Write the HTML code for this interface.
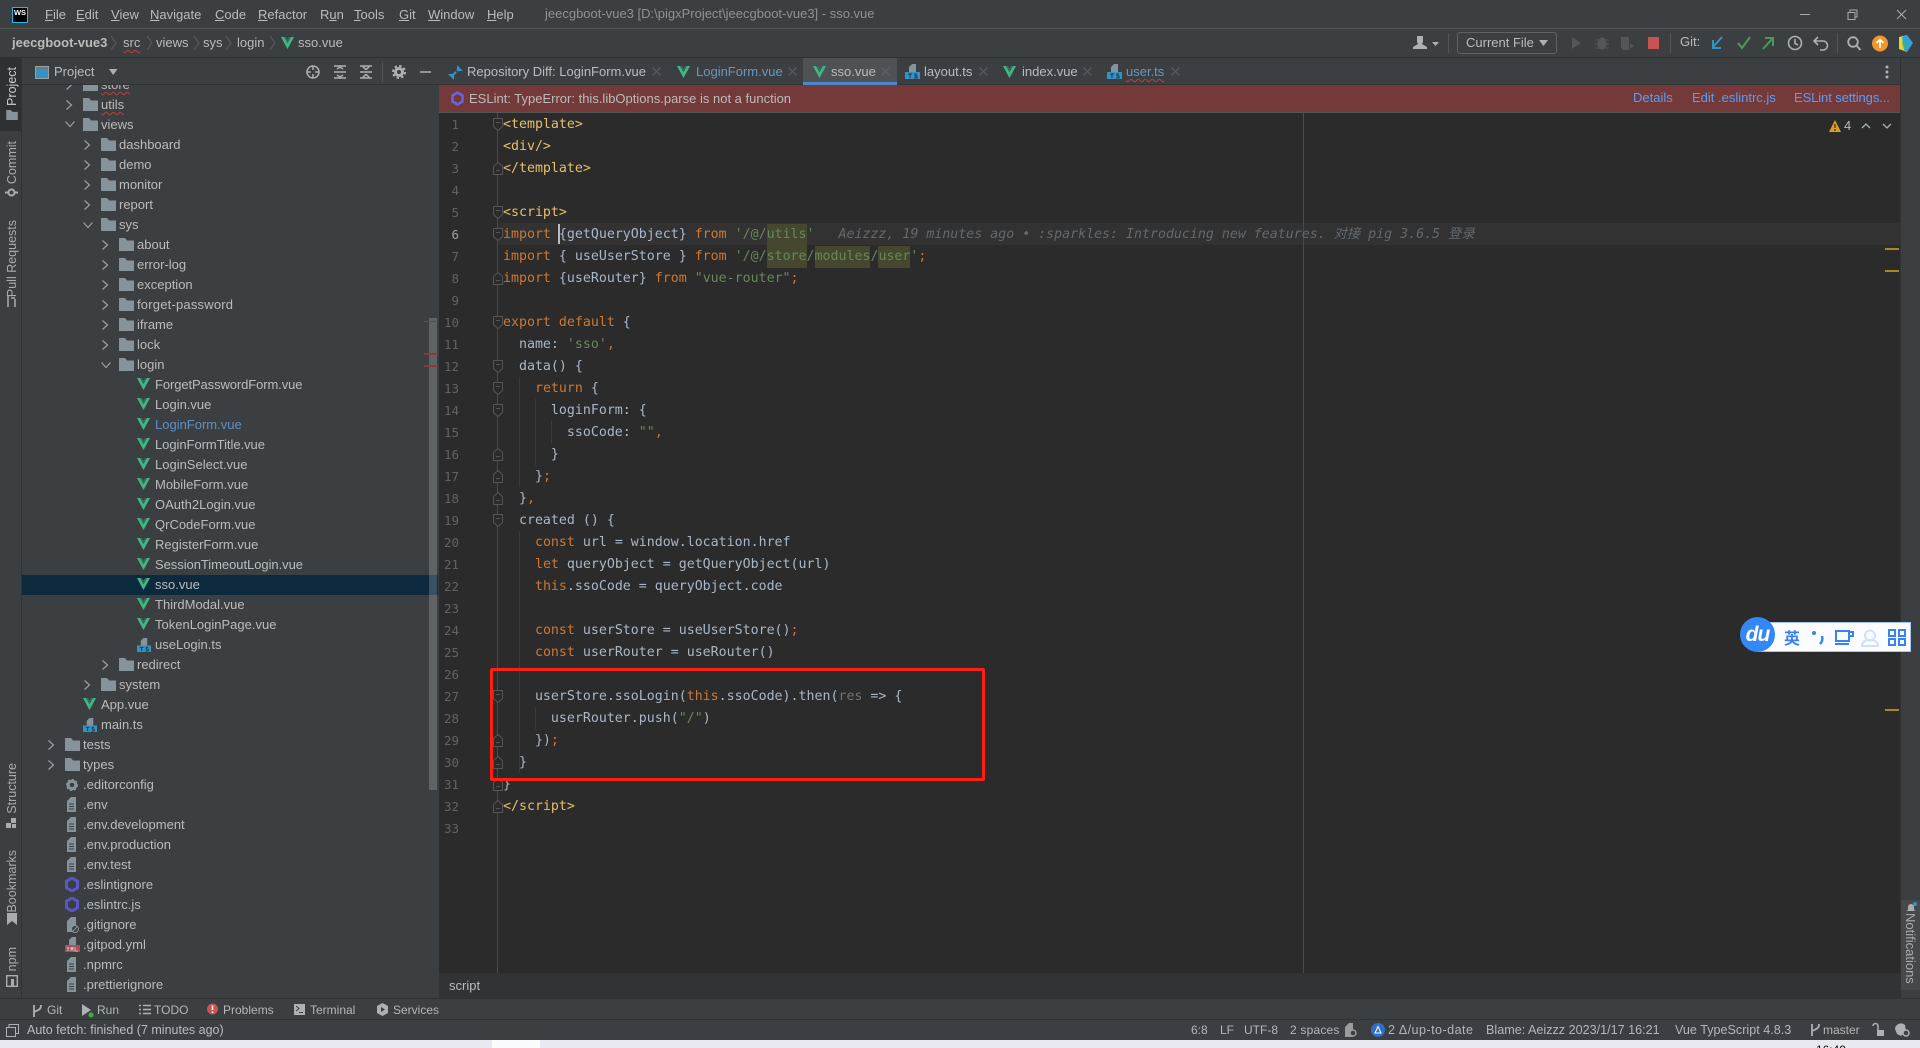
<!DOCTYPE html>
<html lang="en"><head><meta charset="utf-8"><title>jeecgboot-vue3 - sso.vue</title>
<style>
html,body{margin:0;padding:0;width:1920px;height:1048px;overflow:hidden;background:#3c3f41}
body{position:relative;font-family:"Liberation Sans","Noto Sans CJK SC",sans-serif;font-size:13px;color:#bbb}
div,svg,pre{position:absolute}
.b{left:0;right:0}
.t{white-space:nowrap;line-height:20px;height:20px}
.r{white-space:nowrap;line-height:20px;height:20px;color:#bbb}
.wv{text-decoration:underline wavy #bc3f3c 1px;text-underline-offset:2px}
svg{overflow:visible}
.f{width:15px;height:13px}.c{width:8px;height:10px;margin-left:-3px}.c[style*="width:10px"]{margin-left:0}.V{width:13px;height:12px}.d{width:12px;height:15px}
.vl{writing-mode:vertical-rl;transform:rotate(180deg);left:4px;font-size:12.500px;line-height:16px;white-space:nowrap;color:#a9adb0}
.x{width:9px;height:9px}
.n{left:440px;width:19px;text-align:right;font:12.5px/22px "DejaVu Sans Mono",monospace;color:#606366;white-space:nowrap}
.fd{width:10px;height:13px;left:493px}
.g{width:1px;background:#3b3b3b}
pre{margin:0;font:13.28px/22px "DejaVu Sans Mono","Noto Sans CJK SC",monospace;color:#a9b7c6;white-space:pre}
.k{color:#cc7832}.s{color:#6a8759}.h{color:#e8bf6a}.p{color:#72737a}.hl{background:#45482f;display:inline-block;line-height:22px}
.bl{color:#62696f;font-style:italic}
.bm{height:2px;width:14px;left:1885px;background:#a9881c}
.lk{color:#589df6}
.bt{color:#b4b7b9;font-size:12px}
.st{font-size:12.600px}
</style></head><body>
<svg width="0" height="0" style="position:absolute"><defs>
<symbol id="v" viewBox="0 0 13 12"><path d="M0 0h3l3.5 6.2L10 0h3L6.5 12z" fill="#41b883"/><path d="M3 0h2l1.5 2.8L8 0h2L6.5 6.2z" fill="#3a6b63"/></symbol>
<symbol id="f" viewBox="0 0 15 13"><path d="M0 0h6l2 2.500h7V13H0z" fill="#87939a"/></symbol>
<symbol id="cr" viewBox="0 0 8 10"><path d="M1.500 .5l5 4.500-5 4.500" fill="none" stroke="#9da0a2" stroke-width="1.200"/></symbol>
<symbol id="cd" viewBox="0 0 10 8"><path d="M.5 1.500l4.500 5 4.500-5" fill="none" stroke="#9da0a2" stroke-width="1.200"/></symbol>
<symbol id="d" viewBox="0 0 12 15"><path d="M1 15V4L5 0h5v15z" fill="#87939a"/><path d="M3 7h5M3 9.500h5M3 12h5" stroke="#3c3f41"/></symbol>
<symbol id="ts" viewBox="0 0 15 15"><path d="M4 8V3l3-3h4v8z" fill="#87939a"/><rect y="8" width="15" height="7" fill="#3592c4"/><path d="M3 10h4M5 10v4M9 14h3v-2h-2v-2h2" fill="none" stroke="#26343f"/></symbol>
<symbol id="es" viewBox="0 0 14 15"><path d="M7 1l5.500 3.200v6.600L7 14l-5.500-3.200V4.200z" fill="none" stroke="#5a55c9" stroke-width="3"/></symbol>
<symbol id="gr" viewBox="0 0 12 12"><circle cx="6" cy="6" r="3.800" fill="none" stroke="#87939a" stroke-width="3"/><circle cx="6" cy="6" r="5.200" fill="none" stroke="#87939a" stroke-width="1.800" stroke-dasharray="2 2"/></symbol>
<symbol id="x" viewBox="0 0 9 9"><path d="M.5 .5l8 8M8.500 .5l-8 8" stroke="#5e6163"/></symbol>
<symbol id="fs" viewBox="0 0 10 13"><path d="M.5 .5h9v8l-4.500 4-4.500-4zM3 4.500h4" fill="#2b2b2b" stroke="#555"/></symbol>
<symbol id="fe" viewBox="0 0 10 13"><path d="M.5 12.500h9v-8l-4.500-4-4.500 4zM3 8.500h4" fill="#2b2b2b" stroke="#555"/></symbol>
<symbol id="gt" viewBox="0 0 12 14"><path d="M3 1v12M10 1c0 5-3 5-7 7" fill="none" stroke="#aeb1b3" stroke-width="1.800"/></symbol>
</defs></svg>

<!-- title bar -->
<div class="b" style="top:0;height:28px;background:#3c3f41"></div>
<div class="b" style="top:28px;height:1px;background:#555"></div>
<div style="left:12px;top:7px;width:16px;height:16px;background:#000;border:1.500px solid #1fb8ea;box-sizing:border-box;color:#fff;font:bold 7.500px/9px 'Liberation Sans',sans-serif;text-align:center">WS</div>
<div class="t" style="left:45px;top:5px"><u>F</u>ile</div>
<div class="t" style="left:76px;top:5px"><u>E</u>dit</div>
<div class="t" style="left:111px;top:5px"><u>V</u>iew</div>
<div class="t" style="left:150px;top:5px"><u>N</u>avigate</div>
<div class="t" style="left:215px;top:5px"><u>C</u>ode</div>
<div class="t" style="left:258px;top:5px"><u>R</u>efactor</div>
<div class="t" style="left:320px;top:5px">R<u>u</u>n</div>
<div class="t" style="left:354px;top:5px"><u>T</u>ools</div>
<div class="t" style="left:399px;top:5px"><u>G</u>it</div>
<div class="t" style="left:428px;top:5px"><u>W</u>indow</div>
<div class="t" style="left:487px;top:5px"><u>H</u>elp</div>
<div class="t" style="left:545px;top:4px;color:#8f9294">jeecgboot-vue3 [D:\pigxProject\jeecgboot-vue3] - sso.vue</div>
<svg style="left:1797px;top:8px;width:120px;height:12px"><path d="M3 6.500h10" stroke="#aaa"/><path d="M51 4.500h7v7h-7zM53 4.500V2h7v7h-2" fill="none" stroke="#aaa"/><path d="M100 2l9 9M109 2l-9 9" stroke="#aaa"/></svg>

<!-- nav bar -->
<div class="b" style="top:57px;height:1px;background:#2d2f30"></div>
<div class="t" style="left:12px;top:33px;font-weight:bold;color:#bbb">jeecgboot-vue3</div>
<div class="t" style="left:123px;top:33px"><span class="wv">src</span></div>
<div class="t" style="left:156px;top:33px">views</div>
<div class="t" style="left:203px;top:33px">sys</div>
<div class="t" style="left:237px;top:33px">login</div>
<svg style="left:110px;top:36px;width:170px;height:14px" fill="none" stroke="#5a5d5f"><path d="M1 0l5 7-5 7M37 0l5 7-5 7M84 0l5 7-5 7M116 0l5 7-5 7M160 0l5 7-5 7"/></svg>
<svg class="V" style="left:281px;top:37px"><use href="#v"/></svg>
<div class="t" style="left:298px;top:33px">sso.vue</div>
<svg style="left:1413px;top:36px;width:30px;height:14px"><path d="M4 0h6v6l-1 2 5 3v2H0v-2l5-3-1-2z" fill="#aeb1b3"/><path d="M19 6h7l-3.500 4z" fill="#aeb1b3"/></svg>
<div style="left:1448px;top:33px;width:1px;height:20px;background:#515557"></div>
<div style="left:1457px;top:32px;width:100px;height:22px;border:1px solid #5f6366;border-radius:3px;box-sizing:border-box"></div>
<div class="t" style="left:1466px;top:33px">Current File</div>
<svg style="left:1539px;top:40px;width:10px;height:7px"><path d="M0 0h9L4.500 6z" fill="#aeb1b3"/></svg>
<svg style="left:1571px;top:36px;width:95px;height:14px">
<path d="M1 1l9 6-9 6z" fill="#53575a"/>
<ellipse cx="31" cy="7.500" rx="4.500" ry="6" fill="#53575a"/><path d="M24 4h14M24 8h14M24 12h14" stroke="#53575a"/>
<path d="M50 1h8v13h-6l-2-3z" fill="#53575a"/><path d="M59 7l4 3-4 3z" fill="#53575a"/>
<rect x="77" y="1" width="11" height="12" fill="#c75450"/></svg>
<div style="left:1670px;top:33px;width:1px;height:20px;background:#515557"></div>
<div class="t" style="left:1680px;top:32px">Git:</div>
<svg style="left:1711px;top:36px;width:70px;height:14px" fill="none" stroke-width="2"><path d="M11 1L2 11M2 4v8h8" stroke="#3592c4"/><path d="M27 7l4 5 8-11" stroke="#499c54"/><path d="M52 13L62 2M54 2h8v8" stroke="#499c54"/></svg>
<svg style="left:1787px;top:35px;width:45px;height:16px" fill="none" stroke="#aeb1b3" stroke-width="1.600"><circle cx="8" cy="8" r="6.500"/><path d="M8 4v4.500l3 1.500"/><path d="M28 6h8a4.500 4.500 0 0 1 0 9h-3M31 2l-4 4 4 4"/></svg>
<div style="left:1837px;top:33px;width:1px;height:20px;background:#515557"></div>
<svg style="left:1847px;top:36px;width:14px;height:15px" fill="none" stroke="#aeb1b3" stroke-width="1.800"><circle cx="6" cy="6" r="4.800"/><path d="M9.500 9.500l4 4.500"/></svg>
<svg style="left:1872px;top:35px;width:16px;height:17px"><circle cx="8" cy="8.500" r="8" fill="#f2972b"/><path d="M8 13V5M4.500 8L8 4.500 11.500 8" fill="none" stroke="#fff" stroke-width="1.600"/></svg>
<svg style="left:1899px;top:35px;width:15px;height:17px"><path d="M0 2l8-2v17l-8-3z" fill="#e6d33f"/><path d="M3 2l5-2 6 8-6 9-3-2z" fill="#2fa4d8"/><path d="M3 7l5 1-3 6z" fill="#3bb76c"/></svg>

<!-- left stripe -->
<div style="left:0;top:58px;width:22px;height:940px;background:#3c3f41;border-right:1px solid #323232;box-sizing:border-box"></div>
<div style="left:0;top:58px;width:21px;height:73px;background:#2e3032"></div>
<div class="vl" style="top:67px;color:#cdd0d2">Project</div>
<svg style="left:6px;top:110px;width:12px;height:10px"><use href="#f"/></svg>
<div class="vl" style="top:141px">Commit</div>
<svg style="left:5px;top:186px;width:13px;height:13px" fill="none" stroke="#a9adb0" stroke-width="2"><circle cx="6.500" cy="6.500" r="3"/><path d="M0 6.500h3M10 6.500h3"/></svg>
<div class="vl" style="top:220px">Pull Requests</div>
<svg style="left:6px;top:295px;width:11px;height:12px" fill="none" stroke="#a9adb0" stroke-width="1.500"><path d="M2 1v11M9 4v8M5 3h4"/></svg>
<div class="vl" style="top:763px">Structure</div>
<svg style="left:6px;top:818px;width:11px;height:10px"><path d="M5 0h5v5H5zM0 5h5v5H0zM6 6h4v4H6z" fill="#a9adb0"/></svg>
<div class="vl" style="top:850px">Bookmarks</div>
<svg style="left:7px;top:913px;width:10px;height:12px"><path d="M0 0h10v12L5 8l-5 4z" fill="#a9adb0"/></svg>
<div class="vl" style="top:947px">npm</div>
<svg style="left:6px;top:975px;width:12px;height:12px"><rect x=".7" y=".7" width="10.600" height="10.600" fill="none" stroke="#a9adb0" stroke-width="1.400"/><rect x="5" y="4" width="3" height="7" fill="#a9adb0"/></svg>

<!-- project tree -->
<div style="left:22px;top:575px;width:416px;height:20px;background:#0d293e"></div>
<div style="left:429px;top:318px;width:8px;height:472px;background:rgba(255,255,255,.19)"></div>
<div style="left:424px;top:321px;width:14px;height:1px;background:#8a3a3a"></div>
<div style="left:424px;top:353px;width:14px;height:2px;background:#8a3a3a"></div>
<div style="left:424px;top:365px;width:14px;height:2px;background:#8a3a3a"></div>

<svg class="c" style="left:68px;top:80px"><use href="#cr"/></svg><svg class="f" style="left:83px;top:78px"><use href="#f"/></svg><div class="r" style="left:101px;top:75px"><span class="wv">store</span></div>
<svg class="c" style="left:68px;top:100px"><use href="#cr"/></svg><svg class="f" style="left:83px;top:98px"><use href="#f"/></svg><div class="r" style="left:101px;top:95px"><span class="wv">utils</span></div>
<svg class="c" style="left:65px;top:120px;width:10px;height:8px"><use href="#cd"/></svg><svg class="f" style="left:83px;top:118px"><use href="#f"/></svg><div class="r" style="left:101px;top:115px">views</div>
<svg class="c" style="left:86px;top:140px"><use href="#cr"/></svg><svg class="f" style="left:101px;top:138px"><use href="#f"/></svg><div class="r" style="left:119px;top:135px">dashboard</div>
<svg class="c" style="left:86px;top:160px"><use href="#cr"/></svg><svg class="f" style="left:101px;top:158px"><use href="#f"/></svg><div class="r" style="left:119px;top:155px">demo</div>
<svg class="c" style="left:86px;top:180px"><use href="#cr"/></svg><svg class="f" style="left:101px;top:178px"><use href="#f"/></svg><div class="r" style="left:119px;top:175px">monitor</div>
<svg class="c" style="left:86px;top:200px"><use href="#cr"/></svg><svg class="f" style="left:101px;top:198px"><use href="#f"/></svg><div class="r" style="left:119px;top:195px">report</div>
<svg class="c" style="left:83px;top:221px;width:10px;height:8px"><use href="#cd"/></svg><svg class="f" style="left:101px;top:218px"><use href="#f"/></svg><div class="r" style="left:119px;top:215px">sys</div>
<svg class="c" style="left:104px;top:240px"><use href="#cr"/></svg><svg class="f" style="left:119px;top:238px"><use href="#f"/></svg><div class="r" style="left:137px;top:235px">about</div>
<svg class="c" style="left:104px;top:260px"><use href="#cr"/></svg><svg class="f" style="left:119px;top:258px"><use href="#f"/></svg><div class="r" style="left:137px;top:255px">error-log</div>
<svg class="c" style="left:104px;top:280px"><use href="#cr"/></svg><svg class="f" style="left:119px;top:278px"><use href="#f"/></svg><div class="r" style="left:137px;top:275px">exception</div>
<svg class="c" style="left:104px;top:300px"><use href="#cr"/></svg><svg class="f" style="left:119px;top:298px"><use href="#f"/></svg><div class="r" style="left:137px;top:295px;letter-spacing:.2px">forget-password</div>
<svg class="c" style="left:104px;top:320px"><use href="#cr"/></svg><svg class="f" style="left:119px;top:318px"><use href="#f"/></svg><div class="r" style="left:137px;top:315px">iframe</div>
<svg class="c" style="left:104px;top:340px"><use href="#cr"/></svg><svg class="f" style="left:119px;top:338px"><use href="#f"/></svg><div class="r" style="left:137px;top:335px">lock</div>
<svg class="c" style="left:101px;top:361px;width:10px;height:8px"><use href="#cd"/></svg><svg class="f" style="left:119px;top:358px"><use href="#f"/></svg><div class="r" style="left:137px;top:355px">login</div>

<svg class="V" style="left:137px;top:378px"><use href="#v"/></svg><div class="r" style="left:155px;top:375px;letter-spacing:-.1px">ForgetPasswordForm.vue</div>
<svg class="V" style="left:137px;top:398px"><use href="#v"/></svg><div class="r" style="left:155px;top:395px">Login.vue</div>
<svg class="V" style="left:137px;top:418px"><use href="#v"/></svg><div class="r" style="left:155px;top:415px;color:#5c8fc4">LoginForm.vue</div>
<svg class="V" style="left:137px;top:438px"><use href="#v"/></svg><div class="r" style="left:155px;top:435px;letter-spacing:-.05px">LoginFormTitle.vue</div>
<svg class="V" style="left:137px;top:458px"><use href="#v"/></svg><div class="r" style="left:155px;top:455px">LoginSelect.vue</div>
<svg class="V" style="left:137px;top:478px"><use href="#v"/></svg><div class="r" style="left:155px;top:475px">MobileForm.vue</div>
<svg class="V" style="left:137px;top:498px"><use href="#v"/></svg><div class="r" style="left:155px;top:495px">OAuth2Login.vue</div>
<svg class="V" style="left:137px;top:518px"><use href="#v"/></svg><div class="r" style="left:155px;top:515px">QrCodeForm.vue</div>
<svg class="V" style="left:137px;top:538px"><use href="#v"/></svg><div class="r" style="left:155px;top:535px">RegisterForm.vue</div>
<svg class="V" style="left:137px;top:558px"><use href="#v"/></svg><div class="r" style="left:155px;top:555px;letter-spacing:-.05px">SessionTimeoutLogin.vue</div>
<svg class="V" style="left:137px;top:578px"><use href="#v"/></svg><div class="r" style="left:155px;top:575px">sso.vue</div>
<svg class="V" style="left:137px;top:598px"><use href="#v"/></svg><div class="r" style="left:155px;top:595px">ThirdModal.vue</div>
<svg class="V" style="left:137px;top:618px"><use href="#v"/></svg><div class="r" style="left:155px;top:615px">TokenLoginPage.vue</div>
<svg class="d" style="left:137px;top:638px;width:14px;height:14px"><use href="#ts"/></svg><div class="r" style="left:155px;top:635px">useLogin.ts</div>
<svg class="c" style="left:104px;top:660px"><use href="#cr"/></svg><svg class="f" style="left:119px;top:658px"><use href="#f"/></svg><div class="r" style="left:137px;top:655px">redirect</div>
<svg class="c" style="left:86px;top:680px"><use href="#cr"/></svg><svg class="f" style="left:101px;top:678px"><use href="#f"/></svg><div class="r" style="left:119px;top:675px">system</div>
<svg class="V" style="left:83px;top:698px"><use href="#v"/></svg><div class="r" style="left:101px;top:695px">App.vue</div>
<svg class="d" style="left:83px;top:718px;width:14px;height:14px"><use href="#ts"/></svg><div class="r" style="left:101px;top:715px">main.ts</div>
<svg class="c" style="left:50px;top:740px"><use href="#cr"/></svg><svg class="f" style="left:65px;top:738px"><use href="#f"/></svg><div class="r" style="left:83px;top:735px">tests</div>
<svg class="c" style="left:50px;top:760px"><use href="#cr"/></svg><svg class="f" style="left:65px;top:758px"><use href="#f"/></svg><div class="r" style="left:83px;top:755px">types</div>
<svg style="left:66px;top:779px;width:12px;height:12px"><use href="#gr"/></svg><div class="r" style="left:83px;top:775px">.editorconfig</div>
<svg class="d" style="left:66px;top:797px"><use href="#d"/></svg><div class="r" style="left:83px;top:795px">.env</div>
<svg class="d" style="left:66px;top:817px"><use href="#d"/></svg><div class="r" style="left:83px;top:815px">.env.development</div>
<svg class="d" style="left:66px;top:837px"><use href="#d"/></svg><div class="r" style="left:83px;top:835px">.env.production</div>
<svg class="d" style="left:66px;top:857px"><use href="#d"/></svg><div class="r" style="left:83px;top:855px">.env.test</div>
<svg class="d" style="left:65px;top:877px;width:14px;height:15px"><use href="#es"/></svg><div class="r" style="left:83px;top:875px">.eslintignore</div>
<svg class="d" style="left:65px;top:897px;width:14px;height:15px"><use href="#es"/></svg><div class="r" style="left:83px;top:895px">.eslintrc.js</div>
<svg class="d" style="left:66px;top:917px"><path d="M1 15V4L5 0h5v15z" fill="#87939a"/><circle cx="9" cy="12" r="3.500" fill="#3c3f41" stroke="#87939a"/><path d="M7 14l4-4" stroke="#87939a"/></svg><div class="r" style="left:83px;top:915px">.gitignore</div>
<svg class="d" style="left:65px;top:937px;width:15px;height:15px"><path d="M4 8V3l3-3h4v8z" fill="#87939a"/><rect y="8" width="15" height="7" fill="#a8505e"/><path d="M2 10l1 2 1-2M3 12v2M6 14v-4l1 2 1-2v4M10 10v4h3" fill="none" stroke="#e6c8cd" stroke-width=".8"/></svg><div class="r" style="left:83px;top:935px">.gitpod.yml</div>
<svg class="d" style="left:66px;top:957px"><use href="#d"/></svg><div class="r" style="left:83px;top:955px">.npmrc</div>
<svg class="d" style="left:66px;top:977px"><use href="#d"/></svg><div class="r" style="left:83px;top:975px">.prettierignore</div>

<!-- project header (covers clipped rows) -->
<div style="left:22px;top:58px;width:417px;height:27px;background:#3c3f41;border-bottom:1px solid #323232;box-sizing:border-box"></div>
<svg style="left:35px;top:66px;width:14px;height:13px"><rect x=".5" y=".5" width="13" height="12" fill="#3592c4" stroke="#9aa0a4"/><rect x="1" y="1" width="12" height="2.500" fill="#6e7b84"/></svg>
<div class="t" style="left:54px;top:62px">Project</div>
<svg style="left:109px;top:69px;width:9px;height:7px"><path d="M0 0h8.500L4.200 6z" fill="#aeb1b3"/></svg>
<svg style="left:306px;top:64px;width:125px;height:16px" fill="none" stroke="#aeb1b3" stroke-width="1.500">
<circle cx="7" cy="8" r="6"/><path d="M7 2v4M7 10v4M1 8h4M9 8h4"/>
<path d="M28 2h12M28 14h12M28 8h12M31 5l3-2 3 2M31 11l3 2 3-2"/>
<path d="M54 2h12M54 14h12M54 8h12M57 3l3 2.500 3-2.500M57 13l3-2.500 3 2.500"/>
<circle cx="93" cy="8" r="3.500" stroke-width="3"/><circle cx="93" cy="8" r="6" stroke-width="2" stroke-dasharray="2.500 2.200"/>
<path d="M114 8h11"/></svg>
<div style="left:382px;top:62px;width:1px;height:20px;background:#515557"></div>

<!-- tabs -->
<div style="left:439px;top:58px;right:20px;height:27px;background:#3c3f41;border-bottom:1px solid #323232;box-sizing:border-box"></div>
<div style="left:803px;top:58px;width:94px;height:27px;background:#4e5254"></div>
<div style="left:803px;top:82px;width:94px;height:3px;background:#4a88c7"></div>
<svg style="left:448px;top:65px;width:15px;height:15px"><path d="M9 0v6h6L12 3zM6 15V9H0l3 3z" fill="#3592c4"/><path d="M8 7l-3 3M9 4l2 2" stroke="#3592c4" stroke-width="2"/></svg>
<div class="t" style="left:467px;top:62px">Repository Diff: LoginForm.vue</div>
<svg class="x" style="left:652px;top:67px"><use href="#x"/></svg>
<svg class="V" style="left:677px;top:66px"><use href="#v"/></svg>
<div class="t" style="left:696px;top:62px;color:#6897bb">LoginForm.vue</div>
<svg class="x" style="left:788px;top:67px"><use href="#x"/></svg>
<svg class="V" style="left:813px;top:66px"><use href="#v"/></svg>
<div class="t" style="left:831px;top:62px">sso.vue</div>
<svg class="x" style="left:881px;top:67px"><use href="#x"/></svg>
<svg style="left:905px;top:64px;width:15px;height:15px"><use href="#ts"/></svg>
<div class="t" style="left:924px;top:62px">layout.ts</div>
<svg class="x" style="left:979px;top:67px"><use href="#x"/></svg>
<svg class="V" style="left:1003px;top:66px"><use href="#v"/></svg>
<div class="t" style="left:1022px;top:62px">index.vue</div>
<svg class="x" style="left:1083px;top:67px"><use href="#x"/></svg>
<svg style="left:1107px;top:64px;width:15px;height:15px"><use href="#ts"/></svg>
<div class="t" style="left:1126px;top:62px;color:#6897bb"><span class="wv">user.ts</span></div>
<svg class="x" style="left:1171px;top:67px"><use href="#x"/></svg>
<svg style="left:1885px;top:65px;width:4px;height:14px"><circle cx="2" cy="2" r="1.500" fill="#aeb1b3"/><circle cx="2" cy="7" r="1.500" fill="#aeb1b3"/><circle cx="2" cy="12" r="1.500" fill="#aeb1b3"/></svg>

<!-- error bar -->
<div style="left:439px;top:85px;width:1461px;height:27px;background:#743a3a"></div>
<div style="left:439px;top:112px;width:1461px;height:1px;background:#555"></div>
<svg style="left:451px;top:91px;width:13px;height:15px"><path d="M6.500 1.500l5 3v6l-5 3-5-3v-6z" fill="none" stroke="#6a63e0" stroke-width="2.500"/></svg>
<div class="t" style="left:469px;top:89px">ESLint: TypeError: this.libOptions.parse is not a function</div>
<div class="t lk" style="left:1633px;top:88px">Details</div>
<div class="t lk" style="left:1692px;top:88px">Edit .eslintrc.js</div>
<div class="t lk" style="left:1794px;top:88px;letter-spacing:-.1px">ESLint settings...</div>

<!-- editor -->
<div style="left:439px;top:113px;width:1461px;height:860px;background:#2b2b2b"></div>
<div style="left:498px;top:223px;width:1402px;height:22px;background:#323232"></div>
<div style="left:497px;top:113px;width:1px;height:860px;background:#4a4a4a"></div>
<div style="left:1303px;top:113px;width:1px;height:860px;background:#4a4a4a"></div>
<div class="g" style="left:519px;top:377px;height:110px"></div>
<div class="g" style="left:535px;top:399px;height:66px"></div>
<div class="g" style="left:551px;top:421px;height:22px"></div>
<div class="g" style="left:519px;top:531px;height:242px"></div>
<div class="g" style="left:535px;top:707px;height:22px"></div>

<div class="n" style="top:114px">1</div><div class="n" style="top:136px">2</div><div class="n" style="top:158px">3</div><div class="n" style="top:180px">4</div><div class="n" style="top:202px">5</div><div class="n" style="top:224px;color:#a4a3a3">6</div><div class="n" style="top:246px">7</div><div class="n" style="top:268px">8</div><div class="n" style="top:290px">9</div><div class="n" style="top:312px">10</div><div class="n" style="top:334px">11</div><div class="n" style="top:356px">12</div><div class="n" style="top:378px">13</div><div class="n" style="top:400px">14</div><div class="n" style="top:422px">15</div><div class="n" style="top:444px">16</div><div class="n" style="top:466px">17</div><div class="n" style="top:488px">18</div><div class="n" style="top:510px">19</div><div class="n" style="top:532px">20</div><div class="n" style="top:554px">21</div><div class="n" style="top:576px">22</div><div class="n" style="top:598px">23</div><div class="n" style="top:620px">24</div><div class="n" style="top:642px">25</div><div class="n" style="top:664px">26</div><div class="n" style="top:686px">27</div><div class="n" style="top:708px">28</div><div class="n" style="top:730px">29</div><div class="n" style="top:752px">30</div><div class="n" style="top:774px">31</div><div class="n" style="top:796px">32</div><div class="n" style="top:818px">33</div>

<svg class="fd" style="top:118px"><use href="#fs"/></svg><svg class="fd" style="top:162px"><use href="#fe"/></svg><svg class="fd" style="top:206px"><use href="#fs"/></svg><svg class="fd" style="top:228px"><use href="#fs"/></svg><svg class="fd" style="top:272px"><use href="#fe"/></svg><svg class="fd" style="top:316px"><use href="#fs"/></svg><svg class="fd" style="top:360px"><use href="#fs"/></svg><svg class="fd" style="top:382px"><use href="#fs"/></svg><svg class="fd" style="top:404px"><use href="#fs"/></svg><svg class="fd" style="top:448px"><use href="#fe"/></svg><svg class="fd" style="top:470px"><use href="#fe"/></svg><svg class="fd" style="top:492px"><use href="#fe"/></svg><svg class="fd" style="top:514px"><use href="#fs"/></svg><svg class="fd" style="top:690px"><use href="#fs"/></svg><svg class="fd" style="top:734px"><use href="#fe"/></svg><svg class="fd" style="top:756px"><use href="#fe"/></svg><svg class="fd" style="top:778px"><use href="#fe"/></svg><svg class="fd" style="top:800px"><use href="#fe"/></svg>

<pre style="left:503px;top:114px"><span class="h">&lt;template&gt;</span>
<span class="h">&lt;div/&gt;</span>
<span class="h">&lt;/template&gt;</span>

<span class="h">&lt;script&gt;</span>
<span class="k">import</span> {getQueryObject} <span class="k">from</span> <span class="s">'/@/<span class="hl">utils</span>'</span>   <span class="bl">Aeizzz, 19 minutes ago • :sparkles: Introducing new features. 对接 pig 3.6.5 登录</span>
<span class="k">import</span> { useUserStore } <span class="k">from</span> <span class="s">'/@/<span class="hl">store</span>/<span class="hl">modules</span>/<span class="hl">user</span>'</span><span class="k">;</span>
<span class="k">import</span> {useRouter} <span class="k">from</span> <span class="s">"vue-router"</span><span class="k">;</span>

<span class="k">export default</span> {
  name: <span class="s">'sso'</span><span class="k">,</span>
  data() {
    <span class="k">return</span> {
      loginForm: {
        ssoCode: <span class="s">""</span><span class="k">,</span>
      }
    }<span class="k">;</span>
  }<span class="k">,</span>
  created () {
    <span class="k">const</span> url = window.location.href
    <span class="k">let</span> queryObject = getQueryObject(url)
    <span class="k">this</span>.ssoCode = queryObject.code

    <span class="k">const</span> userStore = useUserStore()<span class="k">;</span>
    <span class="k">const</span> userRouter = useRouter()

    userStore.ssoLogin(<span class="k">this</span>.ssoCode).then(<span class="p">res</span> =&gt; {
      userRouter.push(<span class="s">"/"</span>)
    })<span class="k">;</span>
  }
}
<span class="h">&lt;/script&gt;</span>
</pre>
<div style="left:558px;top:224px;width:2px;height:20px;background:#bbb"></div>
<div style="left:490px;top:668px;width:495px;height:113px;border:3px solid #ff1f14;border-radius:2px;box-sizing:border-box"></div>

<!-- breadcrumb -->
<div style="left:439px;top:973px;width:1461px;height:25px;background:#313335;border-top:1px solid #323232;box-sizing:border-box"></div>
<div class="t" style="left:449px;top:976px">script</div>

<!-- warnings -->
<svg style="left:1829px;top:119px;width:70px;height:14px"><path d="M6 1l6 12H0z" fill="#d9a21b"/><path d="M6 5v4M6 10v2" stroke="#3c3020" stroke-width="1.300"/><path d="M33 9l4-4 4 4M54 5l4 4 4-4" fill="none" stroke="#aeb1b3" stroke-width="1.300"/></svg>
<div class="t" style="left:1844px;top:116px">4</div>

<!-- right stripe -->
<div style="left:1900px;top:58px;width:20px;height:940px;background:#3c3f41;border-left:1px solid #323232;box-sizing:border-box"></div>
<div class="bm" style="top:248px"></div><div class="bm" style="top:270px"></div><div class="bm" style="top:709px"></div>
<div style="left:1901px;top:900px;width:19px;height:90px;background:#45494b"></div>
<svg style="left:1905px;top:902px;width:12px;height:11px"><path d="M1 9c2 0 2-2 2-4a3 3 0 0 1 6 0c0 2 0 4 2 4z" fill="#a9adb0"/><circle cx="10" cy="2" r="2" fill="#3592c4"/></svg>
<div style="left:1903px;top:913px;writing-mode:vertical-rl;font-size:13px;line-height:14px;color:#a9adb0;white-space:nowrap">Notifications</div>

<!-- baidu ime -->
<div style="left:1757px;top:622px;width:154px;height:30px;background:#fbfcff;border:1px solid #a8c6f5;box-sizing:border-box"></div>
<div style="left:1740px;top:617px;width:35px;height:35px;border-radius:50%;background:#3388f5;color:#fff;text-align:center;font:italic bold 21px/35px 'Liberation Sans',sans-serif;letter-spacing:-1px">du</div>
<div style="left:1784px;top:626px;font:bold 16px/22px 'Noto Sans CJK SC',sans-serif;color:#3a82f0;white-space:nowrap">英</div>
<svg style="left:1811px;top:629px;width:96px;height:18px"><circle cx="3" cy="4" r="2" fill="#3a82f0"/><path d="M11 7c1 4 0 6-2 8" fill="none" stroke="#3a82f0" stroke-width="2.500"/>
<path d="M25 2h13v10H25zM38 3h4v4h-4M24 15h14" fill="none" stroke="#3a82f0" stroke-width="2"/>
<circle cx="59" cy="6.500" r="5" fill="none" stroke="#cfe0fa" stroke-width="2"/><path d="M51 17c0-5 4-5 5-6h6c1 1 5 1 5 6z" fill="none" stroke="#cfe0fa" stroke-width="2"/>
<path d="M78 1h6v6h-6zM88 1h6v6h-6zM78 10h6v6h-6zM88 10h6v6h-6z" fill="none" stroke="#3a82f0" stroke-width="2"/></svg>

<!-- bottom tool bar -->
<div class="b" style="top:998px;height:22px;background:#3c3f41;border-top:1px solid #323232;border-bottom:1px solid #323232;box-sizing:border-box"></div>
<svg style="left:31px;top:1004px;width:12px;height:14px"><use href="#gt"/></svg><div class="t bt" style="left:47px;top:1000px">Git</div>
<svg style="left:82px;top:1004px;width:12px;height:14px"><path d="M0 0l9 6-9 6z" fill="#aeb1b3"/><circle cx="9" cy="11" r="2.500" fill="#3cb043"/></svg><div class="t bt" style="left:97px;top:1000px">Run</div>
<svg style="left:139px;top:1004px;width:12px;height:11px" stroke="#aeb1b3" stroke-width="1.500"><path d="M0 1.500h2M4 1.500h8M0 5.500h2M4 5.500h8M0 9.500h2M4 9.500h8"/></svg><div class="t bt" style="left:154px;top:1000px">TODO</div>
<svg style="left:207px;top:1003px;width:11px;height:13px"><circle cx="5.500" cy="6" r="5.500" fill="#c75450"/><path d="M5.500 2.500v4.500M5.500 8.500v1.500" stroke="#fff" stroke-width="1.600"/></svg><div class="t bt" style="left:223px;top:1000px">Problems</div>
<svg style="left:294px;top:1004px;width:11px;height:11px"><rect width="11" height="11" fill="#aeb1b3"/><path d="M2 2l3 2.500L2 7M5 8.500h4" fill="none" stroke="#3c3f41"/></svg><div class="t bt" style="left:310px;top:1000px">Terminal</div>
<svg style="left:376px;top:1003px;width:13px;height:13px"><path d="M6.500 0l5.500 3v7l-5.500 3L1 10V3z" fill="#aeb1b3"/><path d="M5 4l4 2.500L5 9z" fill="#3c3f41"/></svg><div class="t bt" style="left:393px;top:1000px">Services</div>

<!-- status bar -->
<svg style="left:6px;top:1024px;width:13px;height:13px" fill="none" stroke="#aeb1b3"><path d="M.5 3.500h9v9h-9zM3 3.500V.5h9.500v9h-3"/></svg>
<div class="t" style="left:27px;top:1020px;font-size:12.500px">Auto fetch: finished (7 minutes ago)</div>
<div class="t bt" style="left:1191px;top:1020px">6:8</div>
<div class="t bt" style="left:1220px;top:1020px">LF</div>
<div class="t bt" style="left:1244px;top:1020px">UTF-8</div>
<div class="t bt" style="left:1290px;top:1020px;letter-spacing:.2px">2 spaces</div>
<svg style="left:1345px;top:1023px;width:12px;height:14px"><path d="M0 14V4l4-4h4v14z" fill="#9a9d9f"/><circle cx="8" cy="10" r="3" fill="#3c3f41" stroke="#9a9d9f" stroke-width="1.500"/></svg>
<svg style="left:1371px;top:1023px;width:14px;height:14px"><circle cx="7" cy="7" r="7" fill="#2f6fc9"/><path d="M7 3.500L10 10H4z" fill="none" stroke="#fff"/></svg>
<div class="t bt st" style="left:1388px;top:1020px;letter-spacing:.45px">2 Δ/up-to-date</div>
<div class="t bt st" style="left:1486px;top:1020px">Blame: Aeizzz 2023/1/17 16:21</div>
<div class="t bt st" style="left:1675px;top:1020px">Vue TypeScript 4.8.3</div>
<svg style="left:1809px;top:1023px;width:12px;height:14px"><use href="#gt"/></svg>
<div class="t bt" style="left:1823px;top:1020px">master</div>
<svg style="left:1871px;top:1023px;width:13px;height:14px"><path d="M6 7h7v6H6z" fill="#aeb1b3"/><path d="M8 7V3a2.500 2.500 0 0 0-5 0" transform="translate(-1 0)" fill="none" stroke="#aeb1b3" stroke-width="1.500"/></svg>
<svg style="left:1895px;top:1023px;width:16px;height:15px"><path d="M0 6a6 6 0 0 1 10-4l1 6-5 5-4-2z" fill="#aeb1b3"/><circle cx="11" cy="10" r="3" fill="#3c3f41" stroke="#aeb1b3" stroke-width="1.500"/></svg>

<!-- windows taskbar fragment -->
<div class="b" style="top:1040px;height:8px;background:#e7eaf0"></div>
<div style="left:492px;top:1040px;width:48px;height:8px;background:#fafbfc"></div>
<div style="left:1816px;top:1043px;font:12px/14px 'Liberation Sans',sans-serif;color:#111;white-space:nowrap">16:49</div>
</body></html>
